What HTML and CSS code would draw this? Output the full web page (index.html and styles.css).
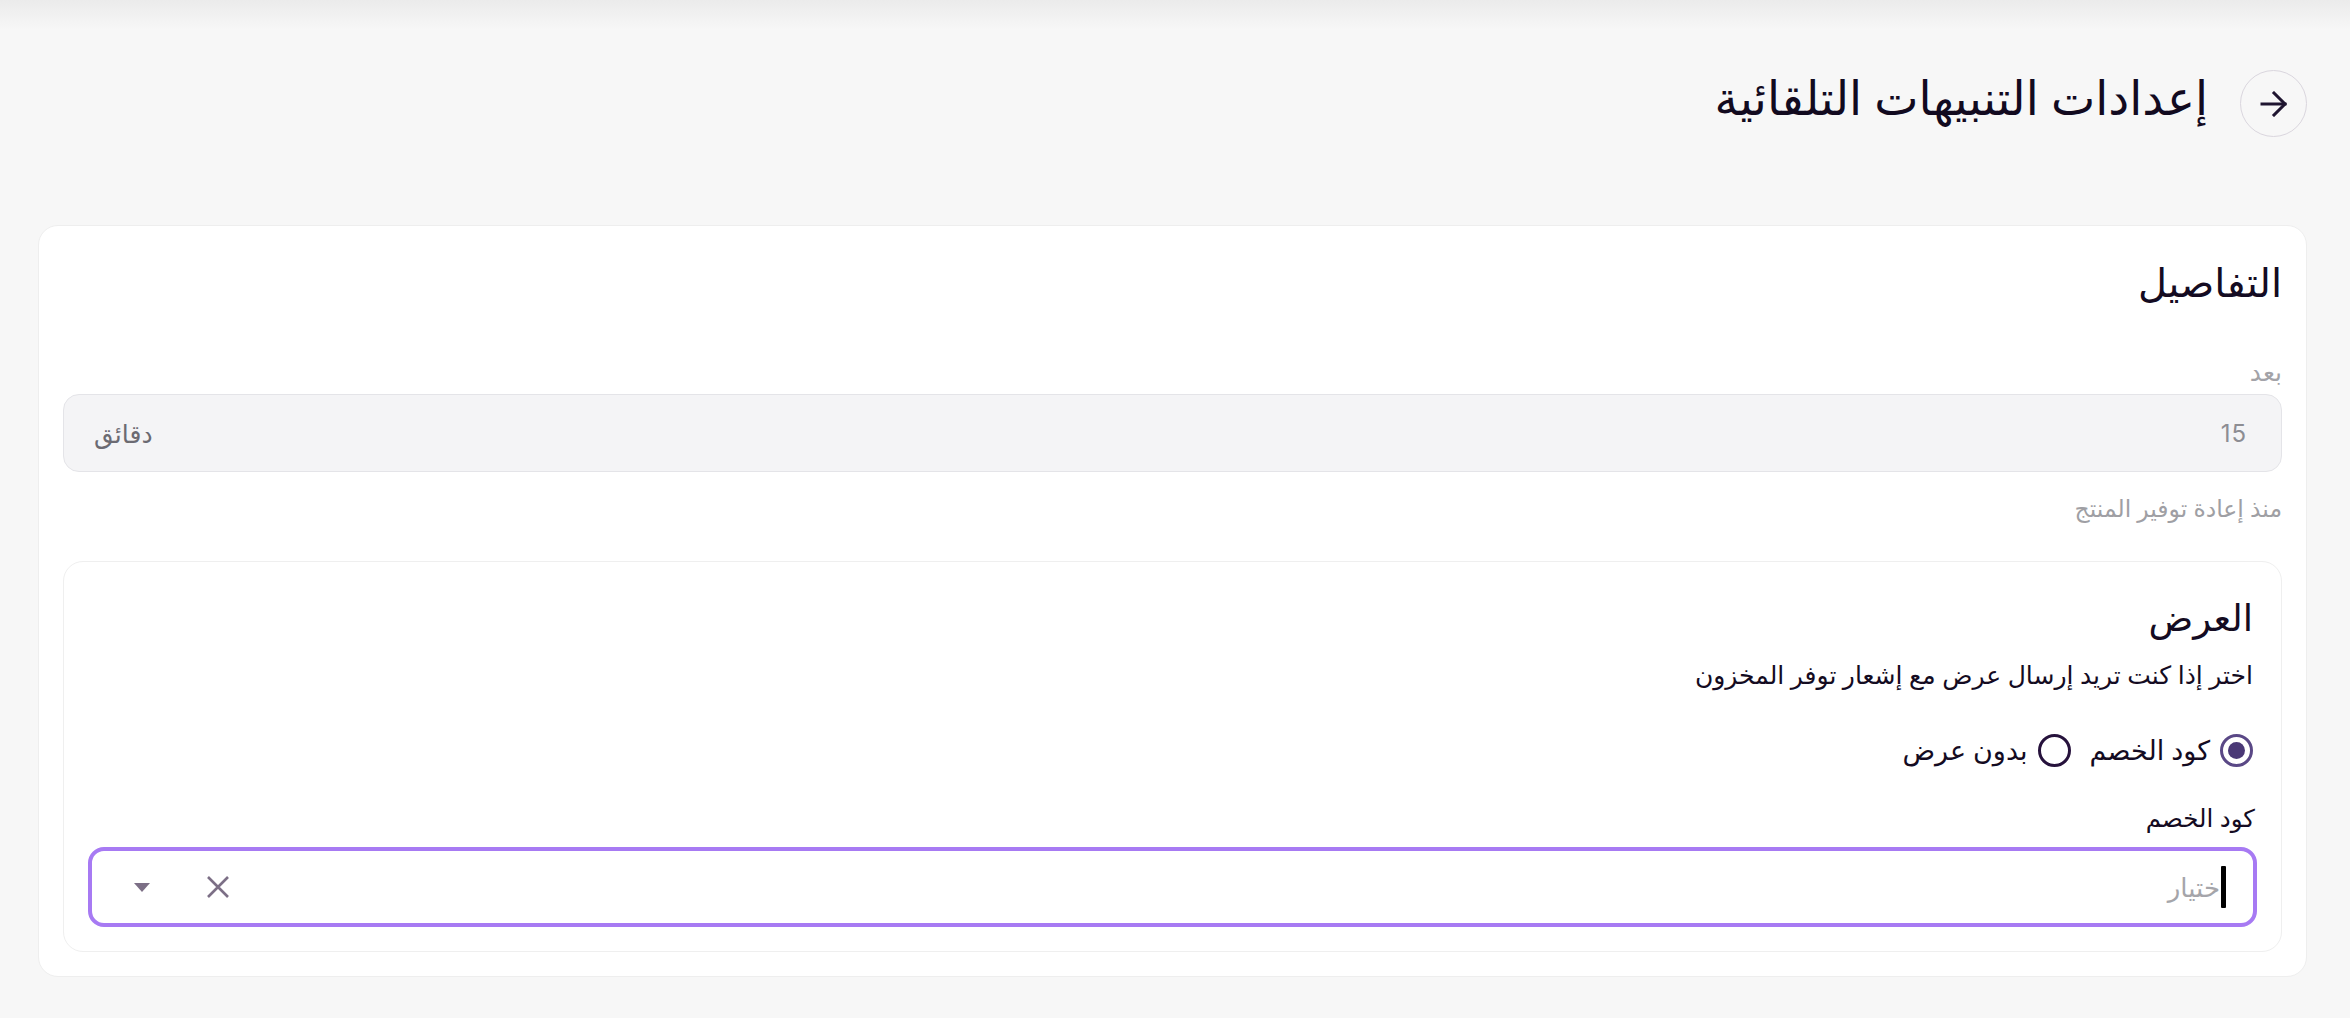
FILE: index.html
```html
<!DOCTYPE html>
<html lang="ar" dir="rtl">
<head>
<meta charset="utf-8">
<title>إعدادات التنبيهات التلقائية</title>
<link rel="stylesheet" href="styles.css">
</head>
<body>
<div class="page">
  <header class="page-header">
    <button class="back-btn" type="button" aria-label="رجوع">
      <svg width="28" height="26" viewBox="0 0 28 26" fill="none" stroke="#1f1530" stroke-width="3" stroke-linecap="square">
        <path d="M2 13H25"/>
        <path d="M14 2L25 13L14 24"/>
      </svg>
    </button>
    <h1 class="page-title">إعدادات التنبيهات التلقائية</h1>
  </header>

  <section class="card">
    <h2 class="card-title">التفاصيل</h2>

    <label class="field-label">بعد</label>
    <div class="num-input">
      <span class="num-value">15</span>
      <span class="num-unit">دقائق</span>
    </div>
    <p class="field-help">منذ إعادة توفير المنتج</p>

    <div class="sub-card">
      <h3 class="sub-title">العرض</h3>
      <p class="sub-desc">اختر إذا كنت تريد إرسال عرض مع إشعار توفر المخزون</p>

      <div class="radio-group">
        <label class="radio">
          <span class="radio-dot checked"></span>
          <span class="radio-text">كود الخصم</span>
        </label>
        <label class="radio">
          <span class="radio-dot"></span>
          <span class="radio-text">بدون عرض</span>
        </label>
      </div>

      <label class="select-label">كود الخصم</label>
      <div class="select">
        <span class="caret"></span>
        <span class="select-placeholder">ختيار</span>
        <span class="select-actions">
          <svg class="clear-icon" width="24" height="24" viewBox="0 0 24 24" stroke="#7c6f86" stroke-width="2.6" fill="none">
            <path d="M2 2L22 22M22 2L2 22"/>
          </svg>
          <span class="drop-arrow"></span>
        </span>
      </div>
    </div>
  </section>
</div>
</body>
</html>
```

FILE: styles.css
```css
* {
  box-sizing: border-box;
}

html, body {
  margin: 0;
  padding: 0;
}

body {
  background: linear-gradient(#ebebeb 0, #f7f7f7 30px) no-repeat, #f7f7f7;
  font-family: "Noto Sans", "DejaVu Sans", sans-serif;
  color: #140b22;
  min-height: 1018px;
}

.page {
  padding: 70px 43px 40px 38px;
}

/* header with back button + title */
.page-header {
  display: flex;
  align-items: center;
  gap: 32px;
  height: 67px;
}

.back-btn {
  width: 67px;
  height: 67px;
  border-radius: 50%;
  border: 1.5px solid #dad6de;
  background: transparent;
  display: flex;
  align-items: center;
  justify-content: center;
  padding: 0;
  flex: none;
}

.page-title {
  margin: 0 0 12px;
  font-size: 47px;
  font-weight: 500;
  line-height: 1;
  color: #120a1f;
}

/* main card */
.card {
  margin-top: 88px;
  background: #fff;
  border: 1px solid #eeeeee;
  border-radius: 20px;
  padding: 24px;
  display: flex;
  flex-direction: column;
}

.card-title {
  margin: 8px 0 0;
  font-size: 40px;
  font-weight: 500;
  line-height: 48px;
}

.field-label {
  margin-top: 50px;
  font-size: 25px;
  line-height: 30px;
  color: #a3a3a8;
}

.num-input {
  margin-top: 8px;
  height: 78px;
  border: 1.5px solid #e4e4e8;
  border-radius: 16px;
  background: #f4f4f6;
  display: flex;
  align-items: center;
  justify-content: space-between;
  padding: 0 34px 0 30px;
}

.num-value {
  font-family: "Inter", sans-serif;
  font-size: 24px;
  color: #8d8d93;
  letter-spacing: 1px;
}

.num-unit {
  font-size: 25px;
  color: #6b6a72;
}

.field-help {
  margin: 20px 0 0;
  font-size: 23.5px;
  line-height: 32px;
  color: #9f9fa4;
}

/* offer sub card */
.sub-card {
  margin-top: 37px;
  border: 1px solid #efefef;
  border-radius: 20px;
  padding: 24px;
  display: flex;
  flex-direction: column;
}

.sub-title {
  margin: 8px 4px 0;
  font-size: 37px;
  font-weight: 500;
  line-height: 46px;
}

.sub-desc {
  margin: 16px 4px 0;
  font-size: 25px;
  line-height: 36px;
  color: #140b22;
}

.radio-group {
  margin-top: 40px;
  display: flex;
  align-items: center;
  gap: 19px;
  padding-right: 4px;
}

.radio {
  display: flex;
  align-items: center;
  gap: 10px;
}

.radio-dot {
  width: 33px;
  height: 33px;
  border-radius: 50%;
  border: 3px solid #26123c;
  display: flex;
  align-items: center;
  justify-content: center;
}

.radio-dot.checked {
  border-color: #5a4886;
}

.radio-dot.checked::after {
  content: "";
  width: 17px;
  height: 17px;
  border-radius: 50%;
  background: #4a3876;
}

.radio-text {
  font-size: 27px;
  line-height: 36px;
}

.select-label {
  margin-top: 34px;
  padding-right: 2px;
  font-size: 24.5px;
  line-height: 32px;
}

.select {
  margin-top: 13px;
  height: 80px;
  border: 4px solid #a77af3;
  border-radius: 16px;
  display: flex;
  align-items: center;
  padding: 0 27px 0 42px;
}

.caret {
  width: 5px;
  height: 42px;
  background: #000;
  border-radius: 1px;
}

.select-placeholder {
  font-size: 26px;
  color: #a5a5aa;
  margin-right: 1px;
}

.select-actions {
  margin-right: auto;
  display: flex;
  align-items: center;
  gap: 56px;
}

.drop-arrow {
  width: 0;
  height: 0;
  border-left: 8px solid transparent;
  border-right: 8px solid transparent;
  border-top: 9px solid #7c6f86;
}
```
